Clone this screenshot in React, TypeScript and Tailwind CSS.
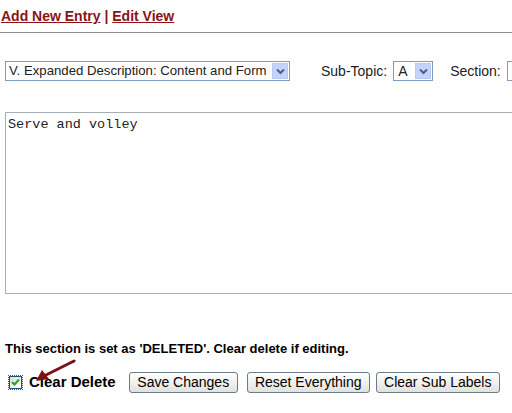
import React from "react";

function DropBtn() {
  return (
    <div className="w-[16px] h-[16px] shrink-0 bg-[#c3d3fd] border border-[#b8c9f4] flex items-center justify-center">
      <svg width="9" height="7" viewBox="0 0 9 7">
        <path d="M1 1.5 L4.5 5 L8 1.5" stroke="#4d6185" strokeWidth="2" fill="none" />
      </svg>
    </div>
  );
}

function Btn({ children, w }: { children: React.ReactNode; w: string }) {
  return (
    <div
      className={`h-[21px] ${w} shrink-0 flex items-center justify-center rounded-[3px] border border-[#6b7b8c] bg-gradient-to-b from-white to-[#e2e2dc] text-[14px] text-black whitespace-nowrap`}
    >
      {children}
    </div>
  );
}

export default function App() {
  return (
    <div className="relative w-[512px] h-[413px] bg-white overflow-hidden font-['Liberation_Sans',Arial,sans-serif] text-black">
      <div className="pt-[8px] pl-[1px] text-[14px] font-bold text-[#8b1216] leading-[17px]">
        <span className="underline">Add New Entry</span>
        <span> | </span>
        <span className="underline">Edit View</span>
      </div>
      <div className="mt-[7px] h-[1px] bg-[#8c8c8c]" />
      <div className="mt-[28px] pl-[5px] flex items-center h-[20px] text-[14px] whitespace-nowrap">
        <div className="w-[285px] h-[20px] shrink-0 border border-[#7f9db9] flex items-center pl-[3px] pr-[1px] justify-between">
          <span className="text-[#222] text-[13.2px]">V. Expanded Description: Content and Form</span>
          <DropBtn />
        </div>
        <span className="ml-[31px] shrink-0 text-[#222]">Sub-Topic:</span>
        <div className="ml-[6px] w-[40px] h-[20px] shrink-0 border border-[#7f9db9] flex items-center pl-[4px] pr-[1px] justify-between">
          <span className="text-[#222]">A</span>
          <DropBtn />
        </div>
        <span className="ml-[17px] shrink-0 text-[#222]">Section:</span>
        <div className="ml-[6px] w-[40px] h-[20px] border border-[#7f9db9] shrink-0" />
      </div>
      <div className="mt-[31px] ml-[5px] w-[520px] h-[182px] border border-[#a3aeb9] pl-[2px] pt-[4px] font-['Liberation_Mono','Courier_New',monospace] text-[13.5px] leading-[15px] text-[#222]">
        Serve and volley
      </div>
      <div className="mt-[47px] pl-[5px] text-[13px] font-bold leading-[15px] whitespace-nowrap">
        This section is set as 'DELETED'. Clear delete if editing.
      </div>
      <div className="mt-[16px] flex items-center h-[21px] whitespace-nowrap">
        <div className="ml-[8px] w-[15px] h-[15px] shrink-0 border border-dotted border-[#555] flex items-center justify-center">
          <div className="w-[13px] h-[13px] border border-[#1c5180] bg-gradient-to-br from-[#dcdcd7] to-white flex items-center justify-center">
            <svg width="9" height="9" viewBox="0 0 9 9">
              <path d="M1 4 L3.5 6.5 L8 1.5" stroke="#21a121" strokeWidth="2" fill="none" />
            </svg>
          </div>
        </div>
        <span className="ml-[6px] text-[15px] font-bold shrink-0">Clear Delete</span>
        <div className="ml-[13px]">
          <Btn w="w-[109px]">Save Changes</Btn>
        </div>
        <div className="ml-[9px]">
          <Btn w="w-[123px]">Reset Everything</Btn>
        </div>
        <div className="ml-[6px]">
          <Btn w="w-[124px]">Clear Sub Labels</Btn>
        </div>
      </div>
      <svg className="absolute left-[30px] top-[358px]" width="48" height="28" viewBox="0 0 48 28">
        <path d="M44 3 L14 18" stroke="#7b1216" strokeWidth="3" strokeLinecap="round" />
        <path d="M6 23 L12 12 L19 21 Z" fill="#7b1216" />
      </svg>
    </div>
  );
}
